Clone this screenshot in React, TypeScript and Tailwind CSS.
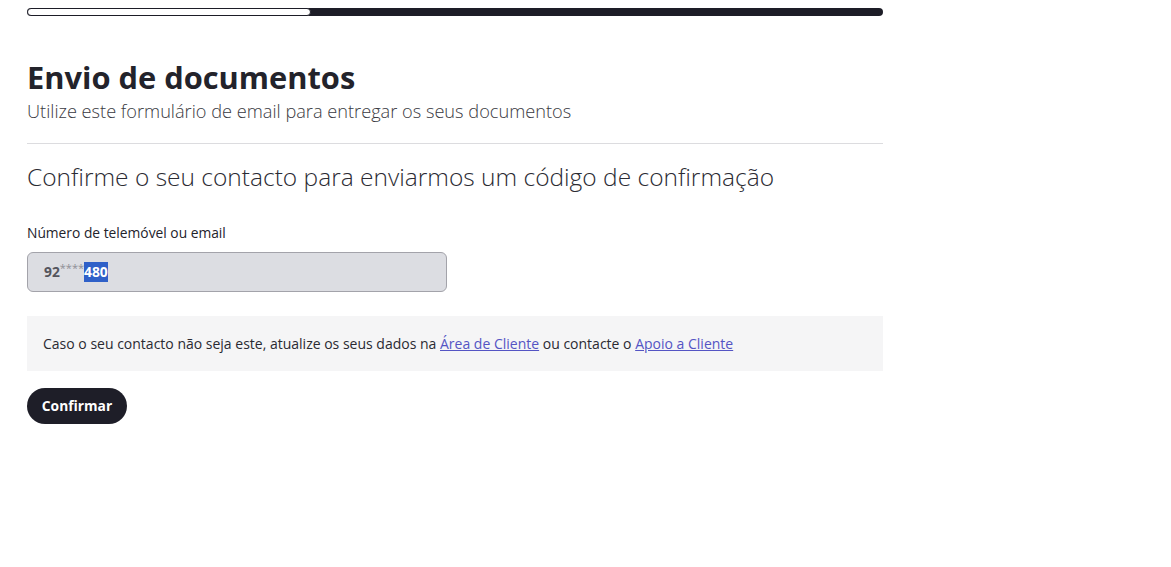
export default function App() {
  return (
    <div className="min-h-[567px] bg-white font-['Open_Sans',sans-serif] text-[#23232b]">
      <div className="w-[856px] ml-[27px] pt-[8px]">
        <div className="flex h-[8px] rounded-full bg-[#1d1d27] overflow-hidden">
          <div className="w-[284px] rounded-full border border-[#1d1d27] bg-white" />
        </div>

        <h1 className="mt-[41px] text-[30.8px] font-bold leading-[40px] text-[#23232b]">Envio de documentos</h1>
        <p className="mt-[2px] text-[18.2px] leading-[24px] font-light text-[#3a3a42]">
          Utilize este formulário de email para entregar os seus documentos
        </p>

        <div className="mt-[20px] h-px bg-[#dcdcdf]" />

        <h2 className="mt-[17px] text-[24.5px] font-light leading-[32px] text-[#2b2b33]">
          Confirme o seu contacto para enviarmos um código de confirmação
        </h2>

        <label className="mt-[31px] block text-[13.8px] leading-[18px] text-[#23232b]">
          Número de telemóvel ou email
        </label>
        <div className="mt-[10px] flex h-[40px] w-[420px] items-center rounded-[6px] border border-[#a3a3aa] bg-[#dcdde2] px-[16px] text-[13.8px] font-bold text-[#55555d]">
          <span>92</span>
          <span className="self-start mt-[9px] text-[11px] font-normal leading-[12px] text-[#8e8e96]">****</span>
          <span className="bg-[#2f60c8] text-white">480</span>
        </div>

        <div className="mt-[24px] flex h-[55px] items-center bg-[#f5f5f6] px-[16px] text-[14px] text-[#2a2a32]">
          <p>
            Caso o seu contacto não seja este, atualize os seus dados na{' '}
            <a href="#" className="text-[#5454c4] underline">Área de Cliente</a> ou contacte o{' '}
            <a href="#" className="text-[#5454c4] underline">Apoio a Cliente</a>
          </p>
        </div>

        <button className="mt-[17px] h-[36px] w-[100px] rounded-full bg-[#1e1e28] text-[13.8px] font-bold text-white">
          Confirmar
        </button>
      </div>
    </div>
  );
}
